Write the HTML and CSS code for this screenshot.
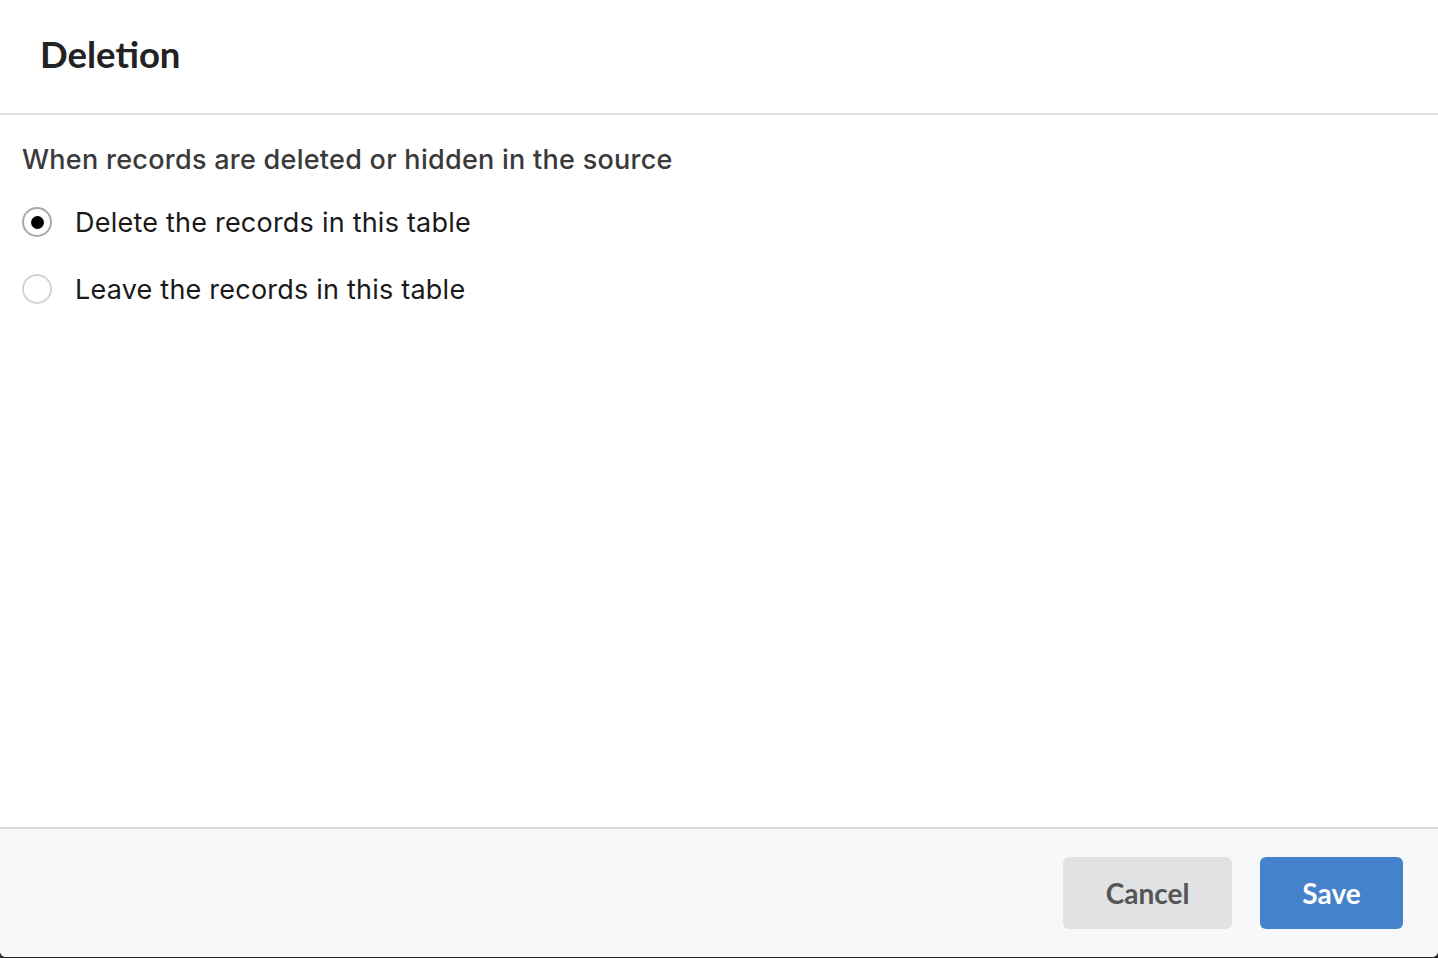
FILE: index.html
```html
<!DOCTYPE html>
<html lang="en">
<head>
<meta charset="utf-8">
<title>Deletion</title>
<link rel="stylesheet" href="styles.css">
</head>
<body>
<div class="modal">
  <header class="modal-header">
    <h1 class="title">Deletion</h1>
  </header>
  <main class="modal-body">
    <p class="question">When records are deleted or hidden in the source</p>
    <div class="options">
      <label class="option">
        <span class="radio radio-checked"><span class="dot"></span></span>
        <span class="option-label">Delete the records in this table</span>
      </label>
      <label class="option">
        <span class="radio"></span>
        <span class="option-label">Leave the records in this table</span>
      </label>
    </div>
  </main>
  <footer class="modal-footer">
    <button class="btn btn-cancel">Cancel</button>
    <button class="btn btn-save">Save</button>
  </footer>
</div>
</body>
</html>
```

FILE: styles.css
```css
* { box-sizing: border-box; }
html, body { margin: 0; padding: 0; }
body {
  background: #2b2b2b;
  width: 1438px;
  height: 958px;
  overflow: hidden;
}
.modal {
  width: 1438px;
  height: 957px;
  background: #ffffff;
  border-radius: 0 0 6px 6px;
  display: flex;
  flex-direction: column;
  overflow: hidden;
}
.modal-header {
  height: 115px;
  border-bottom: 2px solid #e1e1e1;
  padding: 0 40px;
  display: flex;
  align-items: center;
}
.title {
  margin: 0 0 6px 0;
  font-family: Lato, "Liberation Sans", sans-serif;
  font-weight: 700;
  font-size: 36.5px;
  color: #222222;
  letter-spacing: 0;
}
.modal-body {
  flex: 1;
  padding: 27px 22px 0 22px;
  font-family: Inter, "Noto Sans", sans-serif;
}
.question {
  margin: 0;
  font-size: 27px;
  font-weight: 500;
  line-height: 36px;
  color: #3a3a3a;
  letter-spacing: 0.27px;
}
.options {
  margin-top: 26px;
  display: flex;
  flex-direction: column;
  gap: 31px;
}
.option {
  display: flex;
  align-items: center;
  gap: 23px;
  height: 36px;
}
.radio {
  width: 30px;
  height: 30px;
  border-radius: 50%;
  border: 2px solid #d3d3d3;
  background: #ffffff;
  display: flex;
  align-items: center;
  justify-content: center;
  flex: none;
}
.radio-checked {
  border-color: #a8a8a8;
}
.dot {
  width: 13px;
  height: 13px;
  border-radius: 50%;
  background: #000000;
}
.option-label {
  font-size: 27px;
  color: #1a1a1a;
  letter-spacing: 0.22px;
}
.modal-footer {
  height: 130px;
  border-top: 2px solid #dcdcdc;
  background: #f7f8fa;
  display: flex;
  justify-content: flex-end;
  align-items: flex-start;
  padding: 28px 35px 0 0;
  gap: 28px;
}
.btn {
  height: 72px;
  border: none;
  border-radius: 6px;
  font-family: Lato, "Liberation Sans", sans-serif;
  font-weight: 700;
  font-size: 28px;
  padding: 0;
  cursor: pointer;
}
.btn-cancel {
  width: 169px;
  background: #e1e2e3;
  color: #555555;
}
.btn-save {
  width: 143px;
  background: #4483cb;
  color: #ffffff;
}
```
